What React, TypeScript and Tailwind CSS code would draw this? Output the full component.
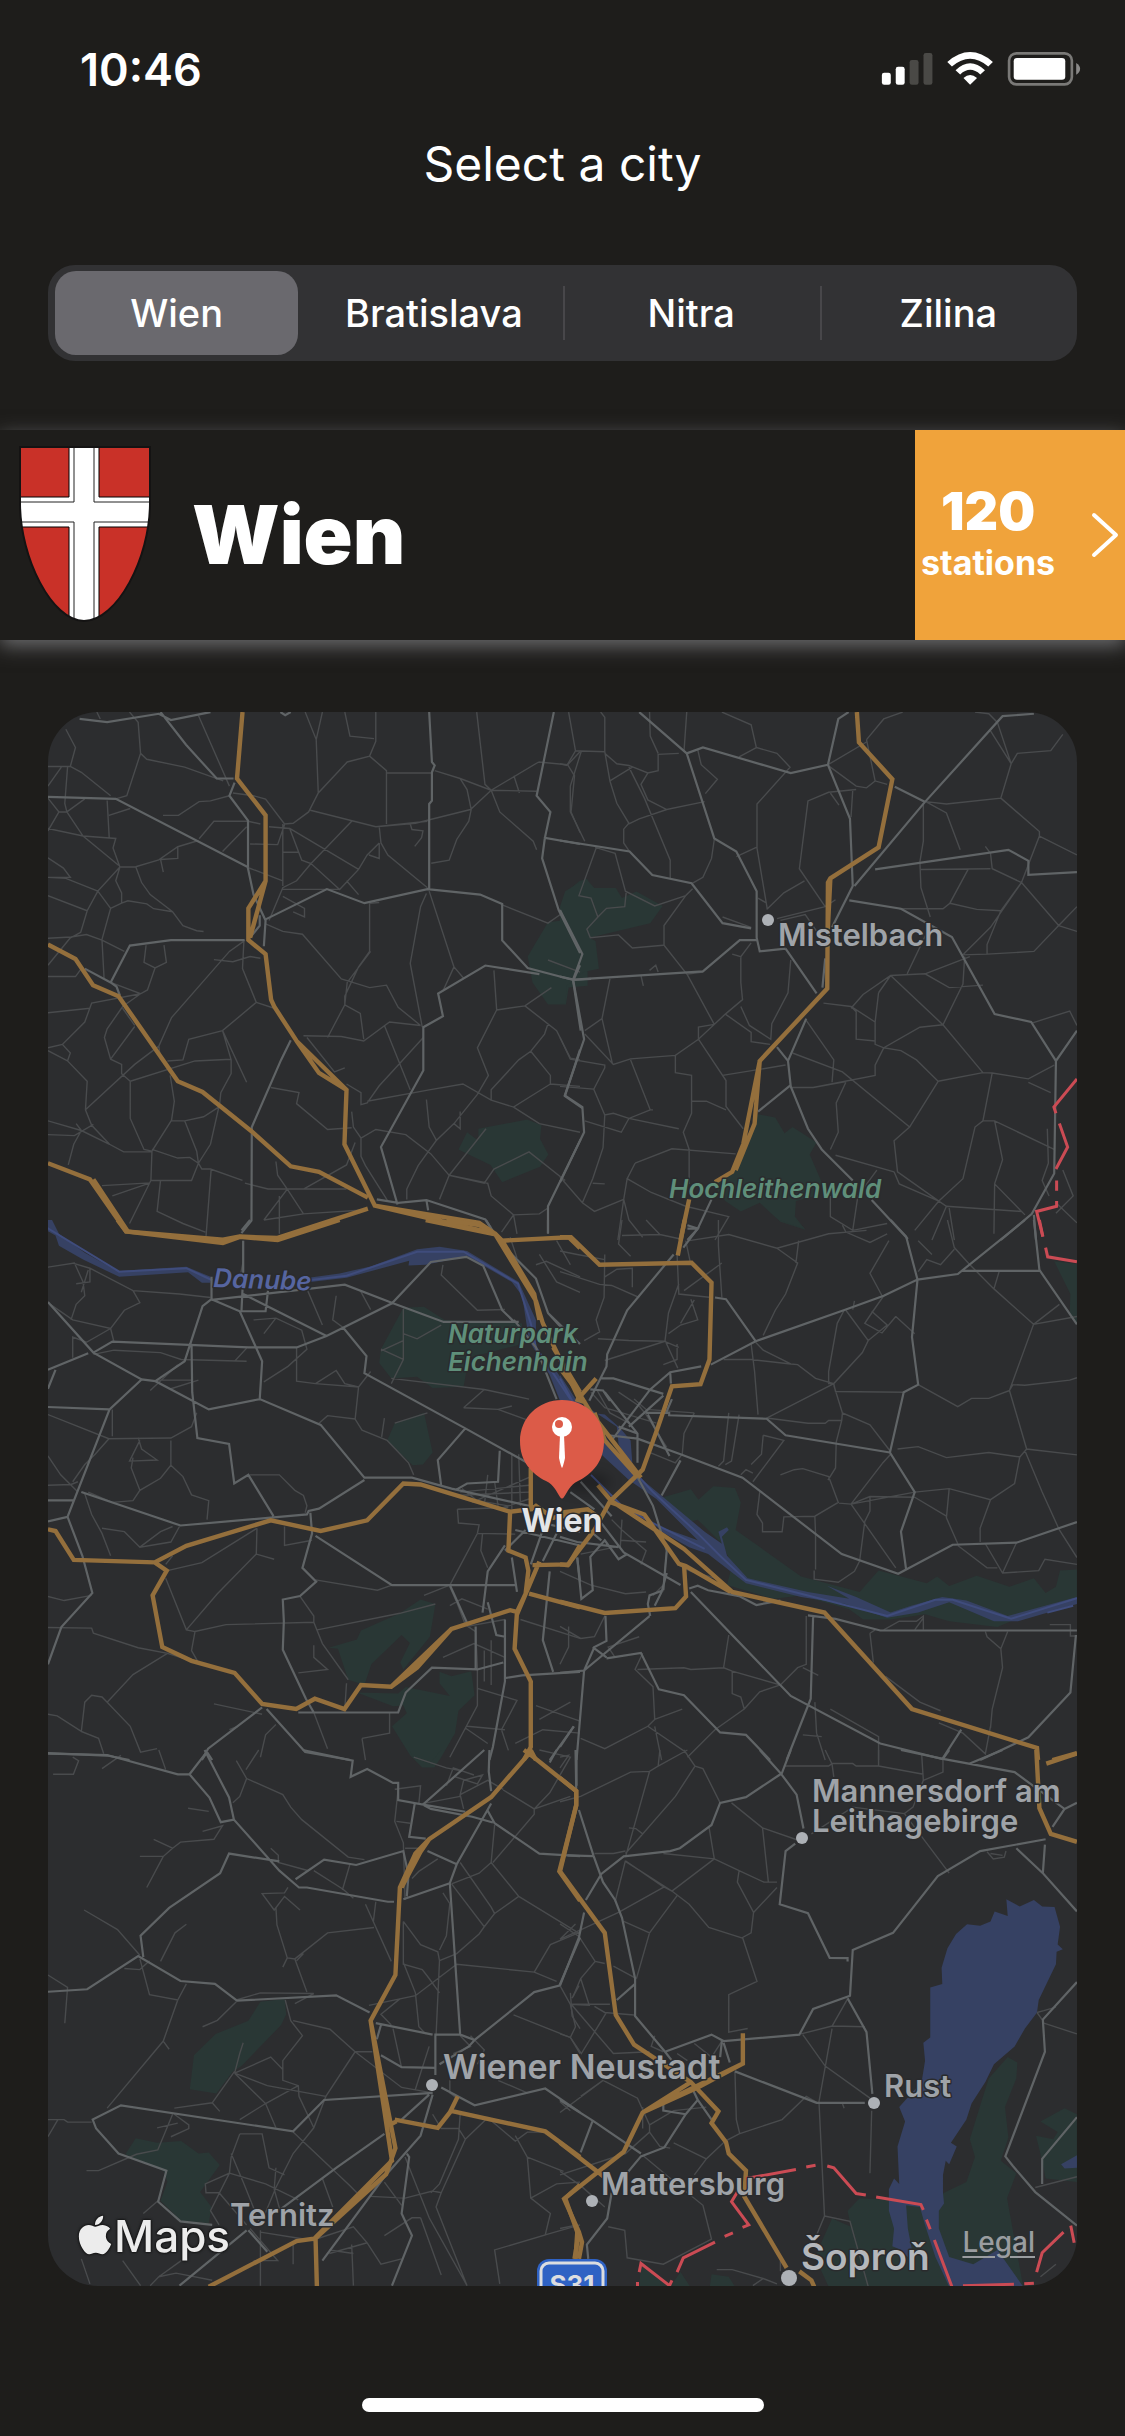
import { useState } from "react";
import { FaApple } from "react-icons/fa";

const cities = ["Wien", "Bratislava", "Nitra", "Zilina"];

type Layer = "park" | "water" | "river" | "minor" | "major" | "highway" | "border";

type Tile = { transform: string } & Partial<Record<Layer, string>>;

const layerOrder: { id: Layer; className: string; width: number }[] = [
  { id: "park", className: "fill-[#293735] stroke-none", width: 0 },
  { id: "water", className: "fill-[#364163] stroke-none", width: 0 },
  { id: "river", className: "fill-none stroke-[#3f4c7c]", width: 2 },
  { id: "minor", className: "fill-none stroke-[#494b4d]", width: 1.4 },
  { id: "major", className: "fill-none stroke-[#606466]", width: 2.2 },
  { id: "highway", className: "fill-none stroke-[#946f3c]", width: 4.4 },
  { id: "border", className: "fill-none stroke-[#cb4b54]", width: 3 },
];

const northWest: Tile = {
  transform: "translate(40 700) scale(0.3444)",
  park:
    "M1517,590 1530,555 1568,525 1590,520 1590,830 1535,835 1527,884 1475,884 1430,820 1416,745 1475,645 1515,640Z" +
    "M1240,1255 1273,1280 1273,1245 1415,1218 1456,1235 1452,1275 1476,1320 1452,1355 1342,1400 1308,1350 1215,1305Z",
  minor:
    "M75,85 103,138 88,193 23,193M88,193 120,210 205,278M62,195 23,250M80,195 72,300 78,325 55,325 23,285M78,325 130,287M55,325 23,380M78,325 125,395 228,480M23,373 125,395 220,402 212,430 232,485" +
    "M165,35 175,55M260,35 285,65 292,155 252,278 220,287M292,155 310,172 420,195 532,235M460,45 550,250M195,292 201,400M200,335 262,315M357,335 402,335 462,295 495,293 550,278M462,403 505,352 604,352 640,360M530,440 600,368" +
    "M233,485 278,484 345,464 400,426 460,408M400,426 400,460 350,463 358,500M278,484 295,530 320,565 385,615 415,655 455,670 475,672M232,485 220,525 237,560 237,590M205,605 237,590 255,583 310,592 330,606 385,615M232,485 168,555 205,605 180,695" +
    "M23,458 68,488 88,515 23,515M23,515 75,518 168,555 137,612 118,675M23,568 137,612M23,692 90,688 135,681 180,697 245,730M90,688 23,770M118,675 90,690M180,697 186,808M23,803 103,803 120,780" +
    "M308,712 302,762 334,778 367,762 360,712M334,778 312,842 292,853 205,820M292,853 240,890 195,955 187,980 205,1043 237,1058 237,1085 262,1107 262,1215 302,1305 325,1310 382,1220 390,1165 378,1090M292,853 150,880 130,935 65,1000 23,1010M145,895 23,908" +
    "M65,1000 88,1025 80,1048 137,1107 132,1190 150,1235 202,1290 243,1312 325,1312 322,1395 260,1520M23,1018 80,1048M23,1222 120,1250 202,1290M23,1262 100,1265 155,1232M120,1250 98,1290 82,1350M105,1230 120,1250M275,948 205,1043M240,895 275,945M345,1005 275,1058 132,1190" +
    "M595,698 550,730 382,922 345,1005 350,1045M505,754 560,760 610,745 640,750M592,700 588,780 628,878 530,960 432,985 415,1045 370,1048M628,878 680,895M530,960 555,1045 555,1085 525,1140 522,1170 495,1290 460,1345 440,1395 322,1395M555,1043 450,1048 262,1107M382,1222 420,1222 475,1210 522,1180M420,1222 455,1310 460,1345 470,1362 495,1362 588,1395M325,1305 400,1330 435,1328 460,1345M497,1362 482,1558M350,1395 340,1485 415,1520 480,1545M180,1410 320,1402 210,1440" +
    "M560,270 620,278 655,288 710,360 735,358 780,325 808,270 892,180 957,163 975,120 975,35M770,35 802,115 808,270M820,35 802,115M885,35 900,105 970,112M957,163 1006,205 1006,360M1006,212 1138,212M785,320 975,368 1090,358 1250,318 1310,262 1448,180M975,368 1125,352M665,368 725,373 760,465 787,475 870,550 925,492 950,450 985,415M725,373 925,492M610,418 690,420 710,362M705,360 705,540M705,442 752,442M905,352 787,475 745,525 705,545 665,640M605,487 705,525M705,550 870,550M890,525 925,565M985,368 990,415 1010,450 1125,545M955,450 985,460 985,415M1075,360 1080,376 1112,380 1108,400 1088,425M1146,205 1220,228 1310,262 1442,265M1220,228 1240,260 1252,318 1245,352 1210,405 1188,465 1136,474M1268,35 1292,245 1310,262 1335,325 1432,410 1442,435M1376,220 1392,270M1448,180 1532,188 1568,150M1532,188 1552,220 1542,325 1568,385" +
    "M705,570 768,605 768,630 735,615M655,650 705,672 762,680 875,810 957,835 1006,828 1040,892 1105,945M957,590 957,730 925,775 885,860 885,885 835,980M885,885 930,910 940,985M957,590 985,588M1122,562 1105,600 1075,765 1110,950M1130,555 1202,775 1170,845M1202,775 1232,810M1342,595 1475,648 1515,620M1475,755 1568,790M1318,785 1326,900 1270,1010 1302,1090 1270,1145 1202,1230 1150,1280 1098,1352 1065,1420 1065,1450M1326,900 1408,888 1485,835M1408,888 1500,960 1540,1040 1568,1045M1475,940 1465,970 1425,1020 1390,1045 1310,1132 1310,1162M1425,1020 1482,1090 1482,1115 1568,1122M1482,1115 1375,1182 1310,1162 1228,1115 1130,1132 950,1165" +
    "M765,975 875,977 940,990 1015,935 1105,945M1000,945 1075,1132M1113,980 1045,1055 985,1120 950,1170 932,1175 932,1140 890,1115M775,980 855,1080 885,1068M670,1125 752,1140 745,1172 835,1247 905,1242M905,1195 910,1240 932,1272 932,1325 945,1352 1010,1455M932,1272 975,1247 1062,1262 1135,1318 1188,1380 1160,1450M1188,1380 1300,1403 1310,1440 1375,1495 1340,1545M1122,1160 1130,1240 1152,1280M1202,1230 1220,1245 1220,1195M1375,1182 1450,1230 1568,1255M1188,1380 1295,1245M1188,1380 1290,1403 1318,1362 1420,1312 1525,1395M595,1403 662,1420 890,1420M765,1420 890,1350 915,1285M718,1420 650,1510M718,1420 765,1492 950,1480M695,1440 695,1550M650,1510 765,1492M685,1340 690,1380 718,1420M1375,1495 1385,1550M1375,1495 1450,1492 1475,1475M530,960 600,1110M885,885 892,820 960,730",
  major:
    "M115,55 195,64 345,40 380,58 495,35M350,35 424,130 513,228 562,228M23,281 220,287 603,485 620,565 655,640 650,715M565,240 550,278 604,350 604,485M655,637 833,549 942,590 1125,549 1278,565 1342,592 1342,698 1416,778 1548,813 1600,810M594,697 380,697 261,713 205,820 130,780M205,820 222,832 232,858M638,625 638,655 610,690M1130,35 1138,180 1146,190 1138,210 1138,292 1130,302 1130,549M1492,35 1442,278 1482,325 1466,400 1568,418M1466,400 1458,460 1506,610 1568,735M1450,796 1293,771 1156,852 1170,918 1113,950 1113,1076 990,1298 1038,1465M728,988 700,1045 615,1240 614,1512 585,1548M978,1450 1040,1460 1122,1452 1293,1508 1308,1532M1122,1452 1127,1482M1568,770 1548,815 1570,960M1568,1015 1524,1150 1575,1185M1570,1275 1475,1470 1475,1548M698,35 712,44 728,35",
  highway:
    "M588,35 572,228 655,335 655,525 605,605 605,697 655,738 671,870 680,890 745,990 890,1132 884,1290 972,1468 1322,1550 1340,1568M655,525 610,690M745,990 810,1083 890,1132M23,710 103,752 154,828 228,860 400,1107 472,1138 614,1252 728,1354 810,1370 952,1445M23,1345 145,1392 250,1543 531,1567 580,1558 690,1562 952,1477M155,1392 255,1543M972,1468 1275,1518 1322,1550",
};

const northEast: Tile = {
  transform: "translate(560 700) scale(0.3444)",
  park:
    "M0,600 15,555 75,518 100,546 162,546 180,575 222,556 298,598 262,648 85,690 103,700 113,780 68,790 20,830 15,882 0,882Z" +
    "M575,1203 625,1212 652,1258 675,1240 745,1285 725,1320 760,1400 740,1440 685,1455 682,1500 712,1538 640,1515 580,1460 525,1485 480,1455 440,1400 500,1370Z",
  minor:
    "M25,35 45,148 20,190 0,185M62,148 30,250 30,325 72,410M62,148 130,150 130,50 118,35M45,148 62,148M130,155 165,185 200,190 255,212 285,205 285,158 345,155M130,150 145,235 210,195M145,235 165,300 200,358 185,375 185,415 202,440M200,195 245,285 320,465 320,520M255,212 235,245 255,290 310,318 420,295M310,318 230,345 200,360M368,35 360,150M260,35 262,105 285,155M470,35 555,72 570,138 630,155 668,195 572,302 572,430 602,608M570,138 520,165M400,145 410,188 457,230 422,272M448,405 440,460 415,515 385,532M512,455 570,428" +
    "M778,190 860,250 890,255 915,235 950,245M890,115 915,235M890,115 940,55 995,35M778,188 890,122M860,260 780,268 720,293 695,490 770,600M785,270 810,305M850,262 845,340M600,608 650,560 710,525M575,575 600,590M1205,35 1245,40 1270,65 1310,185 1280,285 1122,302 1062,295M1250,90 1310,185 1328,155 1425,147 1460,100M1280,285 1392,382 1392,395 1340,530 1255,490 1250,445 1235,425M1392,395 1501,450M1062,295 1122,328 1162,435M1055,300 1055,410 1045,470 1048,545 1075,630M1048,492 1250,490M1185,492 1132,590 1112,606 985,606M1132,590 1210,608 1280,612M1340,530 1448,655 1376,730 1240,738 1165,740M1448,655 1501,600M1448,655 1501,672M1340,530 1250,660 1170,740M1340,530 1280,612 1240,710 1240,738M1075,655 1008,795" +
    "M630,635 770,600 800,580M640,640 712,623 765,700M105,430 55,568 90,575 110,630 78,665 88,690 170,682 210,720 300,712M102,428 160,445 190,555 275,598 365,568 385,548M110,630 135,605 188,600 192,560M365,568 302,655 302,712 370,798 448,942M472,630 555,660M500,738 525,745 555,705M525,745 525,820 530,870 480,912 402,985 402,950 448,942M670,755 662,850 615,940 612,985 550,945 525,890M480,912 555,965 555,992 610,1000M765,880 845,890 915,935 915,1000 940,1010 1045,950 1112,943 1228,1082M845,890 860,905 860,985 915,990M925,850 915,935M845,895 880,855 960,800 1060,795 1130,835 1228,828M960,800 1112,943 1170,825 1175,745M960,800 925,850M1060,795 1190,745M715,930 795,1045 790,1110M675,1025 820,1080 1015,1240 970,1280 980,1370 1100,1455M668,1125 735,1125 915,1090 915,1060 940,1010 990,1018 1035,1045 1098,1107 1015,1240M735,1125 830,1108M830,1110 802,1170 808,1255 785,1305M472,1090 655,1060M402,985 482,1105 482,1180 532,1245M72,970 155,1058 205,1042 335,1032 402,985M335,1032 335,1082 382,1090 382,1200 358,1255 375,1305 375,1405" +
    "M145,810 122,925 72,960M122,925 152,1055M0,980 30,1043 130,1060 130,1068 98,1130 130,1205 155,1200 200,1215 345,1245M98,1130 0,1122M205,1045 262,1190 200,1215 178,1255 72,1222M382,1165 425,1165 482,1190M262,1190 270,1190M130,1205 125,1300 95,1390 65,1460M0,1385 65,1460 100,1485 185,1450 168,1568M218,1345 325,1303 510,1318M218,1345 195,1390 265,1430 365,1470 490,1500 450,1568M195,1390 185,1450 200,1510 240,1560M130,1405 95,1403M1098,1107 1228,1082 1255,1083 1360,1100 1435,1060M1360,1110 1425,1140M1255,1083 1228,1222 1262,1222 1435,1305M1228,1222 1205,1240 1170,1390 1100,1455 1030,1540M1262,1222 1285,1335 1262,1405 1350,1495M1262,1405 1260,1550M800,1322 970,1370M970,1370 985,1405 1100,1455 1122,1470 1340,1485M785,1440 785,1500 850,1540 950,1520M1122,1470 1080,1568M1130,1475 1145,1568M920,1365 865,1440 850,1540M1460,1365 1490,1440 1440,1490M1415,1245 1418,1345 1400,1395 1420,1440M1370,938 1480,903 1501,945M1440,1460 1501,1518M235,800 242,830M260,785 278,770 285,790M370,796 415,790",
  major:
    "M230,35 368,155 415,138 670,212 778,188 842,345 850,540 790,660M778,188 808,55 838,35M368,155 448,402 512,440 571,555 571,690 580,730 655,722M0,408 202,440 268,508 382,532 472,648 555,663M40,812 415,788 522,697 573,697M0,610 65,738 38,812 70,985 14,1148 65,1182 70,1255 0,1400M0,803 40,812M655,722 745,852M715,925 662,1048 670,1122 720,1245 760,1305 850,1395M630,1008 662,1048M668,1120 575,1195M905,1452 1010,1565M1376,40 1285,47 1058,298 855,540M972,252 1062,297M915,492 1302,435 1360,467 1360,508 1501,500M840,582 990,606 1138,688 1262,912 1368,935 1440,1048 1501,960M1440,1048 1435,1375 1370,1492 1280,1568M1376,1495 1382,1568M440,1450 400,1535 370,1568M370,1525 400,1535M770,750 762,835",
  highway:
    "M862,35 868,123 965,230 925,428 785,518 778,530 776,838 580,1048 532,1290 500,1370 450,1400M785,518 776,700M580,1048 565,1230 510,1365M375,1450 350,1568",
  border:
    "M1501,1100 1434,1182 1440,1200M1450,1230 1474,1298 1440,1362M1442,1395 1442,1425M1442,1455 1442,1470 1384,1485 1402,1558",
};

const midWest: Tile = {
  transform: "translate(40 1220) scale(0.3444)",
  park:
    "M1055,255 1115,252 1175,290 1400,300 1400,360 1245,400 1230,484 1140,488 1095,455 1020,460 985,415 990,375Z" +
    "M1115,560 1140,675 1112,710 1082,712 1008,640 1030,590Z" +
    "M838,1242 920,1218 932,1192 1045,1142 1105,1102 1148,1115 1132,1210 1055,1305 1046,1285 1074,1228 1050,1205 962,1290 942,1350 895,1335 865,1245Z" +
    "M1160,1312 1195,1325 1252,1310 1262,1380 1215,1425 1205,1490 1165,1560 1145,1590 1110,1590 1075,1555 1022,1470 1065,1432 1055,1410 1025,1412 920,1372 1040,1375 1062,1356 1190,1382 1160,1345Z",
  water:
    "M0,0 35,0 55,40 130,95 225,148 425,136 495,165 495,182 470,182 430,152 230,165 125,115 55,75 45,45 0,20Z" +
    "M780,168 870,155 960,135 1095,85 1160,78 1240,90 1390,180 1440,290 1440,380 1500,440 1560,530 1510,525 1480,450 1420,350 1400,220 1370,180 1240,105 1120,130 1070,132 1072,118 890,168 785,180Z",
  river: "M0,10 230,150 425,140 500,175M780,175 890,162 1095,92 1230,92 1388,185 1425,300 1440,370 1540,520",
  minor:
    "M23,137 100,125 125,180 130,220 105,245 90,290M95,125 145,140 270,205 405,215 495,225M145,140 145,180 105,185M270,205 290,240 245,262 205,315 95,290 30,245M205,315 215,355M205,315 135,355 95,340 95,400M215,378 350,385 410,405 600,410M155,390 215,378M340,465 440,465M320,495 400,420M380,490 460,465M600,372 565,410M745,372 745,468 800,475 925,485 960,440M800,475 860,437 885,475 925,485M925,485 915,578 935,610 1008,640 1070,705 1085,740M915,578 835,568 810,590M1030,590 1125,560M1000,575 992,630M1055,258 1055,405 1020,475M1055,330 1095,345 1165,305M990,375 1055,405M1055,350 990,380M1020,460 1290,492 1420,520M1230,545 1290,492M1230,545 1330,550 1440,590M1330,550 1370,540" +
    "M1170,130 1165,160 1270,262 1350,260M860,220 850,290 880,312M930,205 960,260M590,60 590,120 580,170M620,290 685,285 760,320 775,375 720,425 650,470M685,285 650,330M775,200 820,305M23,565 200,635 380,633 440,600 455,560M210,550 210,628M200,635 160,680 130,710 95,760M285,632 295,665 340,697 260,700 290,640M380,640 380,712 350,750 290,785 270,815 210,820 140,790M380,712 415,745 440,798 490,815 485,870M270,690 265,720 290,785M23,685 60,740 110,790M23,770 90,768 110,760M140,145 120,210M130,795 150,855 180,910 205,975M180,895 245,905 290,950 380,935 405,890M290,950 350,905 385,890M610,740 695,740 740,785 765,800 775,830 770,850M630,895 628,970 680,985M628,970 515,1085 425,1190M710,890 710,945 790,930M370,1018 470,995 630,895M365,1040 425,1190 450,1195 440,1250 460,1285M450,1195 540,1175 795,1168 820,1230 895,1335" +
    "M23,1093 70,1105 150,1090M23,1183 150,1185 155,1200 285,1242 370,1258 270,1320 195,1400 180,1385 150,1380 130,1400 120,1485 170,1505 185,1550M195,1400 262,1470 292,1545 340,1535M23,1435 50,1440 120,1485M370,1258 440,1280M800,1045 980,1075 1022,1060M755,1093 795,1150 795,1168M805,1190 1045,1142 1148,1115M795,1235 795,1270 835,1305 750,1315M505,1405 645,1435M550,1480 575,1470M640,1560 655,1495 685,1465M795,1430 835,1535M935,1505 1015,1490 1015,1430M935,1505 945,1568M890,1345 885,1420M1190,1060 1270,910 1380,912M1212,840 1215,880 1275,885 1270,910M1212,840 1360,835M1190,1060 1115,1090M1190,1065 1210,1110 1235,1175 1265,1195 1270,1300M1240,1180 1350,1160M1170,1270 1260,1230 1350,1270M1190,1120 1225,1100 1300,1130M1270,1300 1270,1410 1190,1560M1270,1360 1385,1395 1340,1480 1360,1540M1240,1470 1350,1480M1235,1475 1300,1520M1290,1250 1290,1340M1310,1220 1310,1350M1285,910 1280,960 1300,1010M1395,1160 1568,1215M1440,1410 1568,1455M1450,1450 1540,1400M1380,1520 1460,1480 1568,1490" +
    "M1220,790 1420,770M1205,800 1420,790M1225,780 1270,815 1360,830M1255,820 1425,745M1300,740 1290,830M1320,760 1330,830M1370,680 1370,840M1390,680 1395,830M1330,840 1420,810M1365,50 1385,110M1450,100 1500,180 1568,210M1440,130 1470,120 1568,165M1500,60 1540,130M385,975 365,1000",
  major:
    "M23,238 155,385 295,463 335,468 490,550 638,520 815,595 942,748 1080,748 1195,780 1420,830M23,435 140,387M155,385 210,353 605,370 745,370 832,337 1022,242 1135,122 1238,107 1287,133 1342,262 1376,295M498,232 885,188 1025,242 1172,296 1390,296M590,60 590,160 585,265 655,265 662,205M498,165 498,230 580,265 645,410 638,520M498,230 472,250 420,410 335,468M590,215 832,337M440,360 442,500 457,633 549,650 564,765 605,740 678,860M295,463 202,550 80,862 123,975 152,1083 62,1182 23,1290M23,543 200,550M23,875 80,862M23,814 100,814M120,790 408,887 775,855 780,845 810,838 942,755M785,850 790,910 762,1010 802,1050 755,1092 705,1102 708,1165 705,1248 772,1390 795,1430M800,917 1022,1060 1385,1060M880,312 948,395 942,445 1235,605 1415,705M1235,605 1155,697 1165,772M750,1430 1040,1430 1062,1372 1138,1300 1270,1305 1345,1285M645,1415 488,1535 470,1568M658,1420 770,1545 900,1568M23,1548 195,1555 260,1568M1350,80 1440,170 1475,270 1568,360M1376,290 1440,370 1500,520M1350,945 1300,1020 1285,1140M1350,1160 1350,1340 1315,1530 1305,1568M1190,1060 1240,1170M1300,1110 1325,1205 1350,1210M1350,1330 1400,1322 1568,1312M1370,980 1385,1080M1335,670 1330,760 1240,765 1205,785M1460,900 1425,1000M1500,910 1460,990M1380,900 1568,945M1440,875 1568,905M1480,1020 1460,1220 1490,1312M1475,270 1530,330M610,0 585,30M1475,0 1475,40M1295,0 1320,40M1550,1470 1480,1568M1560,980 1568,1050M1410,900 1350,960M1265,1180 1265,1305M470,1568 485,1545 500,1568M23,490 45,435",
  highway:
    "M225,0 250,33 531,67 580,49 690,58 870,0M1120,0 1322,42 1340,60 1535,50 1568,82M1322,42 1440,235 1460,300 1568,525M1345,65 1435,215 1450,290M1490,370 1568,500M1180,0 1275,15 1322,42M23,898 45,903 98,987 333,994 425,946 670,872 815,903 950,872 1055,765 1105,768 1365,847 1425,840 1425,720M333,994 368,1018 327,1090 355,1240 440,1280 565,1315 645,1405 744,1420 798,1390 884,1420 932,1350 1020,1355 1095,1300 1195,1187 1365,1133 1385,1138 1378,1245 1425,1340 1425,1530 1405,1568M1020,1355 1195,1187M1365,847 1360,960 1410,980 1418,1018 1410,1085 1385,1138M1430,1002 1535,1000 1568,945M1450,992 1385,1145M1420,1085 1568,1125M1425,840 1440,830 1490,865 1568,845M1425,1540 1440,1568",
};

const midEast: Tile = {
  transform: "translate(560 1220) scale(0.3444)",
  park:
    "M300,805 380,782 402,812 445,773 508,778 525,820 510,900 700,1035 870,1080 925,1018 1065,1055 1095,1035 1130,1063 1210,1033 1305,1065 1376,1040 1410,1083 1440,1065 1452,1018 1501,1015 1501,1110 1310,1165 1270,1182 1130,1165 1060,1145 960,1160 880,1160 840,1130 700,1090 620,1100 485,1060 500,1000 470,940 400,870 360,880Z" +
    "M1435,120 1501,128 1501,300 1480,270 1482,215Z M635,0 685,0 712,26Z",
  water:
    "M0,450 45,520 90,560 130,565 175,605 205,640 210,705 190,690 170,650 165,600 90,550 150,660 240,755 420,905 470,940 460,905 485,892 490,900 470,920 485,975 545,1040 720,1080 840,1100 775,1062 860,1095 960,1140 1020,1120 1110,1095 1180,1105 1300,1150 1501,1095 1501,1115 1330,1165 1260,1165 1130,1110 1040,1140 950,1155 830,1115 700,1095 540,1055 430,970 375,950 300,908 275,885 400,930 280,810 200,755 130,690 60,620 0,540Z",
  river:
    "M0,460 60,570 150,660 270,790 400,910 470,980 540,1045 700,1085 950,1150 1090,1103 1140,1103 1310,1158 1501,1098M90,740 180,830 270,880 420,955M1415,1140 1490,1120",
  minor:
    "M0,150 115,187 150,190 230,225M130,100 128,225 105,290 115,325 70,350M130,165 165,143 210,140 210,195M0,90 50,100 130,115M180,0 170,70 205,105M180,45 290,42 350,55M250,0 290,42M460,0 460,75 470,225M365,60 380,130M375,60 490,42 630,82 780,40 890,30M630,82 690,125 655,215 625,262 590,335M693,60 685,125M820,15 830,35 900,65 950,40M340,100 345,215 440,225M345,185 315,270 305,350M380,230 400,290 350,305 315,330M390,232 350,300M340,360 340,405 300,420M110,345 200,350 305,352 130,408M305,350 342,430M302,352 345,370M475,405 555,405 670,418 690,420 742,460 795,475 878,385 895,350 830,262M555,360 565,440 575,565M825,262 805,300 780,440 780,475 795,475 800,498 1000,500M568,355 590,378 670,418M470,125 360,205M940,220 905,270 885,300 935,328 975,280M905,265 950,305 895,350M975,280 1030,330M855,235 850,260M945,500 1000,500" +
    "M795,480 820,560 900,595 958,670M600,575 795,475M600,575 720,590 770,590 780,582 818,582 802,645 800,720 778,755M820,560 818,582M590,625 650,640 560,760M590,625 585,680 555,710M525,740 540,725 560,735M490,560 475,700 460,715M520,565 498,700 480,710M390,560 360,620 355,680 335,705 260,675M640,740 680,725 705,722 780,745 808,820 740,860 650,862 645,905 588,905 588,880 572,855 580,790M740,860 742,910 742,1015M810,822 845,825 900,803 1030,805M845,825 935,708M935,708 960,680M845,825 1030,790M845,825 975,1010M900,803 900,845 885,875 870,990 855,1020 808,1052 738,1043 738,1018M1030,790 1130,780 1250,812 1320,765 1335,688 1245,675 1122,690 1040,658 980,665M1130,780 1122,865 1155,940M1030,805 1122,860M1250,812 1220,895 1220,935M1355,665 1335,688M1040,478 1155,542 1195,518 1245,518 1305,495 1355,665 1501,682M1305,495 1315,478 1350,480 1480,465 1501,458M1305,495 1375,303 1501,280M1375,303 1260,200 1190,130 1145,80 1125,0M1375,303 1450,245M1260,200 1275,150M1040,150 1065,115 1105,130 1145,85M1040,60 1080,100M955,60 900,155 935,220M1350,670 1400,790 1450,900 1501,980M1155,945 1240,1010 1270,1010M1235,940 1285,1025 1390,1018 1408,985 1501,1000M1325,938 1285,1025" +
    "M0,1180 60,1215 100,1210 130,1150M0,1020 90,1060 190,1085 250,1080M25,1180 25,1240 0,1290M60,970 160,950M150,870 180,900 250,960 235,1000M175,930 250,935M180,870 175,950M160,1270 140,1240 230,1210M490,1205 475,1300 500,1310 640,1350 690,1300 715,1290 715,1150M225,1305 360,1300 380,1305 475,1300M240,1258 218,1305 270,1355 275,1450 255,1470 130,1535 60,1505M275,1470 295,1568M255,1470 365,1545M275,1450 355,1420M500,1310 500,1375 525,1385 535,1420 450,1480 370,1560M535,1420 580,1370 640,1350M705,1300 750,1322M705,1495 760,1500M740,1400 745,1490 770,1568M785,1420 925,1500 925,1568M900,1200 910,1285M900,1200 915,1190M940,1190 985,1165 1035,1165 1055,1150 1055,1190M1030,1190 1055,1155M945,1325 1045,1400 1105,1425M1100,1460 1170,1490 1235,1550 1250,1470M1300,1195 1280,1245 1285,1300 1255,1420 1250,1475M1235,1195 1240,1210 1280,1245M1422,1175 1482,1175 1482,1208 1501,1208M310,960 300,1060 270,1090M340,1000 380,1020 450,1040 480,1060M215,520 250,550 390,560M90,500 130,545 280,590M105,490 145,560 200,590M170,500 230,540 250,565 310,660",
  major:
    "M330,100 195,262 137,390 135,425 85,525M410,425 320,442 262,492 150,640M320,442 322,475M438,420 568,352 830,260 940,220 1038,173 1155,157 1350,0M1165,148 1395,148M960,0 1005,48 1038,173 1022,340 1040,478 998,500 958,675 1030,790 990,905 1005,1015M450,225 482,230 568,352M1376,0 1392,145 1501,303M117,460 155,460 300,505M88,492 125,495 145,525M130,500 225,620 225,705M255,565 318,685M250,560 317,560 317,567 600,577 655,625 958,675M140,625 225,635 350,680 530,748 818,970 982,1027 1140,943 1325,937 1501,877M350,698 295,800M370,25 400,25 358,80M200,700 270,830 310,960 300,1075M120,880 185,965 350,1060M195,970 170,985 130,930 88,978 95,1075 62,1100 50,980M380,1080 670,1382 930,1520 1110,1565 1165,1480M375,1070 400,1062 430,1075 520,1092 570,1118 640,1105M735,1150 728,1390 658,1568M720,1148 800,1158 930,1192 1501,1192M1498,1205 1482,1372 1360,1502 1220,1568M132,1150 135,1222 100,1240 70,1308 48,1568M260,1150 70,1308 0,1315M95,1240 135,1270M135,1273 235,1257 287,1363 360,1380 465,1488 540,1495 610,1568M300,1075 260,1090 255,1115 262,1150M310,1025 295,1080 275,1120M300,510 200,600M325,520 308,560M170,600 225,620M40,1470 0,1530M0,860 60,880 120,930M0,920 50,935 170,950M60,760 150,860M30,790 100,840",
  highway:
    "M0,50 32,50 115,130 382,124 440,182 434,405 408,477 325,483 285,600 240,725 145,817 100,900 22,1002 0,1000M362,0 342,103M0,430 60,510 90,560 235,748M20,440 60,510 105,460M0,850 80,840 105,858M110,770 148,815 360,955 500,1080 768,1140 1022,1420 1385,1533 1388,1568M148,820 245,855 345,998 365,1005 495,1080M360,1000 366,1093 335,1127 130,1141 0,1108M45,520 75,530M1430,1568 1501,1548M100,560 130,640 220,740",
  border: "M1392,0 1402,48M1410,80 1416,107 1501,121",
};

const southWest: Tile = {
  transform: "translate(40 1750) scale(0.3444 0.3571)",
  park:
    "M640,705 710,697 715,740 700,770 585,885 560,900 512,962 435,950 447,855 510,795 605,758Z" +
    "M278,1087 340,1100 410,1095 460,1130 490,1127 522,1162 465,1238 498,1280 490,1325 410,1318 350,1262 370,1210 360,1180 248,1132Z" +
    "M1072,0 1165,0 1132,38 1085,22Z",
  minor:
    "M38,68 97,68 112,30 95,20M180,52 235,15M345,0 365,55M570,30 600,80 705,125 728,160 760,195 895,300 942,307M600,80 580,130 560,148M635,0 598,55M430,163 490,172M472,228 530,212 505,250 408,258 385,275 330,250M385,275 358,298 290,298M358,298 310,385M525,215 530,212M670,275 692,295 692,315 780,338M128,448 225,503 290,575M425,488 392,512 350,592M290,585 318,685 400,700 425,655M400,700 358,815 195,1003M358,815 375,838M245,612 290,615 318,590M23,630 80,665 72,765M720,385 710,400 645,402 680,448 710,410 755,448M685,440 688,490 718,582 705,608M718,582 740,585 835,512 970,497M740,585 775,678M765,570 745,590M795,338 880,390 910,415M900,320 878,392M945,432 1020,592M975,425 968,480M570,700 640,680 795,682 740,710M570,705 515,757 472,775M712,700 728,758 762,800 705,870 705,925 750,940 752,970M735,758 842,782 915,845 965,845M915,845 830,970 795,1058 735,1130 685,1225 640,1330M565,905 670,860 705,895M565,900 500,988 390,1003M565,905 655,990 685,1058M565,905 660,940 830,970M750,940 655,990 580,1035M752,970 795,1058M565,905 580,850 590,820M500,988 522,1012M915,845 1050,945 1140,960" +
    "M23,1083 52,1035M23,1035 70,1035 80,1042 150,1042M385,1020 342,1120 280,1132 170,1178 135,1178M390,1020 432,1050 432,1060 380,1083M340,1058 400,1045M580,1075 645,1075 665,1170 710,1190M580,1075 555,1140 550,1185 480,1215 482,1240 520,1240M555,1130 590,1210 640,1330M735,1070 900,1220 920,1240M685,1170 680,1230 700,1300M550,1185 655,1215 750,1260M550,1185 495,1290 520,1330M520,1240 600,1330M300,1298 345,1260M240,1430 292,1500M120,1425 145,1495M410,1430 345,1475 320,1500M345,1475 395,1465 500,1485M640,1345 640,1500M640,1350 770,1370 800,1375M610,1340 690,1430 620,1430M735,1380 735,1440M820,1200 850,1280M905,1385 910,1500M840,1400 910,1410M800,1370 910,1335 950,1380 990,1440 1050,1425M950,1380 840,1410M1000,1210 1050,1275M1060,1140 1130,1310 1240,1500M1140,1020 1165,1060 1215,1060 1235,1090 1165,1240 1140,1235 1060,1255 960,1250M1220,1020 1215,1090 1160,1215 1135,1240M1235,1090 1300,1030 1380,1095 1415,1070 1465,1070M1165,1240 1150,1280 1240,1500M1105,1310 1165,1470M1105,1310 1080,1310 1000,1360M1380,1080 1415,1140 1425,1255 1482,1298 1467,1358 1320,1400 1335,1495M1415,1140 1520,1180M1467,1358 1568,1330M1425,1255 1500,1215 1568,1210" +
    "M1030,110 1105,100 1100,150M1085,20 1180,50 1230,60M1040,110 1030,200 1055,260 1060,420M1035,200 1075,205M1060,275 1100,275M1055,480 1055,600 1110,615 1130,640 1160,680M1055,595 1090,680 1100,775 1120,795M955,715 1090,688 1210,600 1435,622 1500,648M1160,590 1150,800M1160,590 1155,565 1105,545 1055,480M1160,560 1180,520 1190,430 1170,400M1195,375 1290,495 1275,515 1210,570 1160,590M1290,495 1320,458 1310,440 1220,315M1320,458 1390,410 1310,315 1320,210M1390,410 1568,515M1310,315 1275,345 1195,375M1345,112 1435,165 1540,130M1435,165 1435,180 1315,315M1435,165 1480,120 1540,20 1450,0M1435,622 1482,545 1568,510M1375,742 1540,805 1568,850M1540,680 1545,745 1568,780M1565,660 1545,695M1220,800 1250,830 1200,850M1090,950 1130,830M1025,780 1050,890M1250,800 1290,840 1270,880M1205,75 1270,95 1285,70 1230,85 1220,125 1300,85 1345,110M1220,125 1230,165M1110,150 1220,130M1180,100 1200,50 1260,70M1080,360 1100,340 1155,305M1020,770 990,740 1045,697M1330,925 1415,960M1190,900 1190,960 1210,975",
  major:
    "M23,10 195,14 400,68 434,68 482,8 478,0M434,68 492,133 525,202 563,195 549,133 482,8M563,195 695,338 752,385 775,385 1010,425 1028,425M1055,418 1190,373 1220,797 1148,797 1148,910M695,312 549,290 523,345 375,442 292,520 300,580M23,677 137,670 285,577 408,647 508,655 572,702 860,687 957,735M742,362 825,307 918,322 1055,283 1070,350 1065,410M763,0 908,30 902,75 950,53 1025,92 1040,92 1040,140 1112,153 1290,0M1112,153 1235,173M1305,0 1303,60 1310,115M1310,150 1210,320 1190,373M1300,170 1320,205 1450,290 1568,297M1125,283 1210,320M1115,155 1135,165 1255,187 1315,203M1568,525 1508,660 1435,678 1262,812 1220,797M975,765 1140,797M990,770 978,810M990,855 1050,888 1150,890M1262,812 1245,830 1160,880M1165,945 1262,995 1467,948 1568,1015M1140,965 1105,1080 1000,1195 820,1430M1130,965 1050,1035M1140,960 825,980 735,1068 235,995 153,1035 163,1060 228,1130 367,1178 343,1265 408,1320 500,1330M1000,1075 860,1170 700,1285M1065,1130 1072,1140 1050,1298 1080,1360 1022,1500M600,1345 405,1500M605,1345 660,1405M1500,0 1480,35M1555,0 1557,110M1088,150 1072,243 1120,248",
  highway:
    "M1405,0 1420,10 1310,132 1130,250 1090,290 1045,385 1032,630 960,758 1032,1115 1005,1188 800,1368 745,1375 490,1503M1130,250 1105,285 1050,385M960,758 1022,1150 800,1365 804,1503M1420,10 1557,115 1557,155 1508,340 1568,422M1030,1035 1155,1058 1190,1015 1213,970M1190,1010 1467,1068 1568,1140M1015,1050 1035,1040M1568,1218 1525,1255 1560,1350 1555,1425",
};

const southEast: Tile = {
  transform: "translate(560 1750) scale(0.3444 0.3571)",
  park:
    "M1300,860 1328,875 1325,920 1292,1000 1302,1085 1280,1150 1325,1185 1298,1255 1345,1503 1100,1503 950,1290 1115,1240 1180,1210 1205,1140 1190,1090 1225,980 1245,920Z" +
    "M1465,1003 1501,1020 1501,1210 1410,1200 1400,1150 1382,1080 1432,1090 1445,1070 1395,1040Z" +
    "M835,1290 870,1255 960,1260 1050,1280 1110,1503 780,1503 740,1420 790,1312 845,1335Z" +
    "M235,1440 320,1503 230,1503ZM350,1462 378,1503 320,1503ZM440,1468 490,1475 508,1503 435,1503Z",
  water:
    "M1296,418 1335,438 1376,420 1400,438 1436,440 1452,495 1445,545 1460,558 1442,565 1440,600 1390,700 1385,735 1350,780 1320,830 1260,880 1235,930 1195,990 1180,1035 1135,1100 1152,1110 1130,1160 1120,1150 1112,1190 1112,1240 1115,1270 1100,1290 1100,1340 1130,1420 1200,1440 1270,1400 1345,1503 1130,1503 1090,1420 1060,1330 1045,1280 1005,1275 1010,1340 1030,1440 990,1400 965,1390 970,1340 955,1290 955,1230 970,1200 985,1215 980,1110 1002,1040 985,1000 1050,930 1060,870 1055,820 1075,805 1075,665 1110,655 1108,610 1125,555 1150,515 1182,488 1220,492 1250,480 1262,452 1300,465Z" +
    "M1455,1160 1501,1135 1501,1170 1465,1172Z",
  minor:
    "M290,0 285,45 260,60 205,62 60,130 0,145M260,60 190,300M370,0 285,45M360,0 392,45 415,52 465,148M392,45 335,130 240,235 190,290M200,218 220,220 240,235M100,290 155,290 190,283M300,290 448,305 520,338 592,370 605,370 588,218 498,148M433,218 448,305 325,395 190,312M588,218 690,252M605,370 630,370M520,338 515,370 562,455 555,512 530,525 572,648 490,685 490,790 545,780M630,385 562,455M190,310 295,380 325,395 375,432 432,497 530,527M340,408 260,512 185,480M260,512 222,640M160,425 190,310M300,385 170,455 0,530M45,487 0,530M0,487 55,522 102,592 60,640 38,690M102,592 130,598M155,605 222,640M60,640 85,715 30,712 0,660M30,712 45,775 30,805 0,795M30,712 145,712M35,715 155,850 260,845M135,735 62,850 30,805M100,718 130,735 215,742M650,45 780,45 790,38 850,38 860,45 925,45 1055,68M770,0 790,40 795,75M925,0 925,45M1050,10 1055,85 1025,160 1000,178M1055,85 1112,62 1112,25M730,235 850,160 1000,178 1130,345M700,795 790,773 885,775M835,697 790,773M705,797 770,885 900,975M790,780 752,985 768,1305 740,1370M752,990 715,970 645,1035 520,1075M768,1305 842,1320 895,1503M905,1010 900,1185M508,900 512,1035 522,1075M820,990 825,1003M1385,735 1405,730 1440,720M1405,765 1501,795M1380,1225 1501,1195M1385,735 1400,755M1240,285 1258,305 1290,300 1295,283M1250,290 1285,295M1395,1475 1440,1440" +
    "M0,1015 125,925 225,975 260,1050 260,1070 190,1130 0,1190M125,925 60,970M260,1050 330,1010 425,1000M260,1070 290,1110 320,1115M330,1100 425,1145 480,1095 520,1075M425,1145 390,1190M240,1135 370,1240 415,1275 440,1370 300,1440 195,1422 188,1345 140,1335M455,1455 500,1455 590,1480 560,1500M590,1480 630,1495M640,1430 640,1460M0,1180 60,1220 130,1280M0,1340 50,1330M240,1000 240,1060M0,20 25,15 0,50M275,800 265,830 300,845M340,850 370,870M390,822 440,860 470,815M0,985 30,1010",
  major:
    "M48,0 48,100M580,0 643,68 670,0M643,68 687,125 707,220M640,68 540,132 465,148 440,210 348,275 320,283 185,298 120,347 75,420M55,168 97,295 125,370 160,420 180,470 218,640 218,745 305,845 325,870M22,295 97,297M70,455 55,525 0,660M218,655 165,700M990,0 1112,25 1320,62 1465,165 1430,215M1190,38 1285,0M1465,165 1501,148M1112,25 1130,0M683,262 655,283 638,432 720,457 783,582 835,583 835,592M1410,250 1220,283 1097,353 967,512 850,560 842,688 735,725 695,797 475,815 440,797 305,845M835,695 890,790 907,963M1408,265 1402,345 1501,452M1325,275 1402,345M508,900 745,988 885,988M1501,650 1402,755 1408,845 1293,1138 1315,1165 1380,1238 1501,1332M1501,1028 1400,1145 1400,1215M0,980 95,1038 235,1130M95,1038 60,1127M385,950 400,980 365,1020 303,1113 235,1138 190,1190M400,980 440,1035M150,1240 137,1312 78,1385 82,1425M365,1020 300,1010 300,990M470,815 465,860M475,820 493,875",
  highway:
    "M0,78 47,115 47,155 0,340 130,512 162,742 215,825 380,930 460,1012 440,1045 482,1098 490,1130 540,1178 535,1250 658,1450M695,1460 730,1485 738,1503M531,793 531,878 240,1015M531,878 400,945 240,1015M380,930 240,1015 185,1125 110,1182 12,1257 55,1350 42,1425M55,1350 64,1378 55,1425M0,1100 110,1182 140,1205M1383,0 1392,163 1425,235 1501,257M1412,38 1501,10",
  border:
    "M520,1230 498,1265 548,1330 530,1337M502,1352 478,1362M450,1378 358,1422 340,1462M325,1485 318,1500 235,1438 230,1462M225,1490 225,1503M540,1200 685,1175M715,1168 742,1163M776,1165 795,1170 860,1242 888,1246M918,1252 1048,1273 1055,1288M1064,1315 1075,1342M1087,1372 1138,1503M1170,1500 1318,1496M1348,1495 1376,1493M1384,1462 1400,1408 1462,1350M1483,1332 1493,1380",
};

const tiles = [northWest, northEast, midWest, midEast, southWest, southEast];

const dots: [number, number, number][] = [
  [768, 920, 6],
  [802, 1838, 6],
  [432, 2085, 6],
  [874, 2103, 6],
  [592, 2201, 6],
  [789, 2278, 8],
];

const townLabels: { x: number; y: number; text: string; big?: boolean }[] = [
  { x: 778, y: 946, text: "Mistelbach" },
  { x: 812, y: 1802, text: "Mannersdorf am" },
  { x: 812, y: 1832, text: "Leithagebirge" },
  { x: 443, y: 2079, text: "Wiener Neustadt", big: true },
  { x: 884, y: 2097, text: "Rust" },
  { x: 601, y: 2195, text: "Mattersburg" },
  { x: 230, y: 2226, text: "Ternitz" },
];

const parkLabels = [
  { x: 669, y: 1198, text: "Hochleithenwald" },
  { x: 448, y: 1343, text: "Naturpark" },
  { x: 448, y: 1371, text: "Eichenhain" },
];

function StatusBar() {
  return (
    <div className="flex h-[138px] items-center justify-between pr-[44px] pl-[80px]">
      <span className="text-[45px] leading-none font-semibold">10:46</span>
      <svg viewBox="66 60 600 115" className="h-[38px] w-[200px]" aria-label="Signal, Wi-Fi, battery">
        <g className="fill-white">
          <rect x="66" y="129" width="27" height="36" rx="7" />
          <rect x="108" y="111" width="27" height="54" rx="7" />
          <rect x="150" y="90" width="27" height="75" rx="7" className="fill-[#4a4946]" />
          <rect x="192" y="69" width="27" height="96" rx="7" className="fill-[#4a4946]" />
          <path d="M333,165 313,145 Q333,127 354,145Z" />
          <path d="M289,121 Q333,79 378,121 L364,134 Q333,106 303,134Z" />
          <path d="M264,96 Q333,36 402,96 L388,110 Q333,63 278,110Z" />
          <rect x="465" y="84" width="156" height="66" rx="10" />
        </g>
        <rect x="451" y="70" width="190" height="94" rx="22" className="fill-none stroke-[#7a7977]" strokeWidth="8" />
        <path d="M654,99 Q666,106 666,117 Q666,128 654,135Z" className="fill-[#8a8988]" />
      </svg>
    </div>
  );
}

function Shield() {
  const outline = "M20,29 H150 V85 C150,140 117,203 84,203 C52,203 20,140 20,85Z";
  return (
    <svg viewBox="18 27 134 180" className="h-[180px] w-[134px] shrink-0" aria-label="Coat of arms of Wien">
      <clipPath id="shield">
        <path d={outline} />
      </clipPath>
      <g clipPath="url(#shield)">
        <rect x="18" y="27" width="134" height="180" className="fill-[#c93128]" />
        <path d="M69,20V79H10V109H69V210H99V109H160V79H99V20Z" className="fill-white stroke-black" strokeWidth="1" />
        <path d="M74,20V84H10V104H74V210H94V104H160V84H94V20Z" className="fill-white stroke-[#222]" strokeWidth="1" />
      </g>
      <path d={outline} className="fill-none stroke-[#141313]" strokeWidth="2" />
    </svg>
  );
}

function CityMap() {
  return (
    <section className="relative mx-[48px] mt-[72px] overflow-hidden rounded-[50px] bg-[#2c2d2f]" aria-label="Map">
      <svg viewBox="48 712 1029 1574" className="block w-full font-['Inter',sans-serif]" role="img" aria-label="Map of Wien">
        {layerOrder.map((layer) =>
          tiles.map((tile, i) =>
            tile[layer.id] ? (
              <path
                key={layer.id + i}
                d={tile[layer.id]}
                transform={tile.transform}
                className={layer.className}
                strokeWidth={layer.width}
                vectorEffect="non-scaling-stroke"
              />
            ) : null,
          ),
        )}
        {dots.map(([x, y, r]) => (
          <circle key={x} cx={x} cy={y} r={r} className="fill-[#adb1b6]" />
        ))}
        <g className="stroke-[#2a2b2d] [paint-order:stroke]" strokeWidth="3" strokeLinejoin="round">
          <g className="fill-[#9fa3a8] font-semibold">
            {townLabels.map((l) => (
              <text key={l.text} x={l.x} y={l.y} className={l.big ? "text-[34px]" : "text-[31px]"}>
                {l.text}
              </text>
            ))}
            <text x="801" y="2270" className="fill-[#b4b7bb] text-[37px]">
              Šoproň
            </text>
          </g>
          <g className="fill-[#5f8f7a] text-[26px] font-semibold italic">
            {parkLabels.map((l) => (
              <text key={l.text} x={l.x} y={l.y}>
                {l.text}
              </text>
            ))}
          </g>
          <text x="213" y="1287" transform="rotate(2 213 1287)" className="fill-[#5665a0] text-[26px] font-semibold italic">
            Danube
          </text>
        </g>
        <ellipse cx="585" cy="1482" rx="26" ry="10" className="fill-black/25 blur-[6px]" />
        <path
          d="M562,1400 C586,1400 604,1418 604,1441 C604,1462 592,1474 578,1481 C570,1485 568,1491 564,1497 Q562,1500 560,1497 C556,1491 554,1485 546,1481 C532,1474 520,1462 520,1441 C520,1418 538,1400 562,1400Z"
          className="fill-[#dc5b48]"
        />
        <circle cx="562" cy="1427" r="10" className="fill-white" />
        <circle cx="559" cy="1424" r="4" className="fill-[#dc5b48]" />
        <path d="M560,1435H564L565,1458Q563,1467 562,1468Q561,1467 559,1458Z" className="fill-white" />
        <text x="562" y="1532" textAnchor="middle" className="fill-[#e3e5e8] stroke-[#2a2b2d] text-[32px] font-bold [paint-order:stroke]" strokeWidth="3">
          Wien
        </text>
        <rect x="537" y="2259" width="70" height="60" rx="12" className="fill-[#2f62c4]" />
        <rect x="541" y="2263" width="62" height="60" rx="8" className="fill-none stroke-[#dcdde0]" strokeWidth="3" />
        <text x="572" y="2294" textAnchor="middle" className="fill-[#dcdde0] text-[26px] font-bold">
          S31
        </text>
      </svg>
      <div className="absolute right-[42px] bottom-[26px] left-[30px] flex items-end justify-between">
        <div className="flex items-end text-[#ececec] [filter:drop-shadow(0_0_1px_#111)_drop-shadow(0_0_1px_#111)]">
          <FaApple className="mb-[3px] h-[44px] w-[34px]" aria-label="Apple" />
          <span className="ml-[2px] text-[44px] leading-[48px] font-medium">Maps</span>
        </div>
        <a href="#legal" className="mb-[2px] text-[28px] leading-[32px] font-medium text-[#9a9da0] underline decoration-2 underline-offset-4">
          Legal
        </a>
      </div>
    </section>
  );
}

export default function App() {
  const [selected, setSelected] = useState("Wien");
  return (
    <main className="min-h-screen overflow-hidden bg-[#1e1d1b] font-['Inter',sans-serif] text-white">
      <StatusBar />
      <h1 className="mt-[-4px] text-center text-[48px] leading-[60px] font-normal">Select a city</h1>
      <div role="tablist" className="mx-[48px] mt-[71px] grid h-[96px] grid-cols-4 rounded-[27px] bg-[#323234] py-[6px]">
        {cities.map((city, i) => (
          <button
            key={city}
            role="tab"
            aria-selected={city === selected}
            onClick={() => setSelected(city)}
            className={
              "relative text-[38px] font-medium " +
              (city === selected ? "mx-[7px] rounded-[21px] bg-[#6a696e]" : "")
            }
          >
            {city}
            {i > 1 && <span className="absolute top-[15px] left-0 h-[54px] w-[2px] bg-[#48474a]" />}
          </button>
        ))}
      </div>
      <button className="mt-[69px] flex h-[210px] w-full items-stretch bg-[#1e1d1b] text-left [box-shadow:0_6px_18px_#6a6a6c]">
        <span className="flex flex-1 items-center pl-[18px]">
          <Shield />
          <span className="ml-[40px] text-[81px] leading-none font-black">Wien</span>
        </span>
        <span className="flex w-[210px] items-center justify-between bg-[#f0a33b] px-[6px]">
          <span className="flex flex-col items-center">
            <span className="text-[52px] leading-[56px] font-black">120</span>
            <span className="text-[34px] leading-[46px] font-bold">stations</span>
          </span>
          <svg viewBox="0 0 28 46" className="h-[46px] w-[28px] fill-none stroke-white" strokeWidth="4" strokeLinecap="round" strokeLinejoin="round" aria-hidden="true">
            <path d="M3,3 25,23 3,43" />
          </svg>
        </span>
      </button>
      <CityMap />
      <div className="mx-auto mt-[112px] mb-[24px] h-[14px] w-[402px] rounded-full bg-white" />
    </main>
  );
}
